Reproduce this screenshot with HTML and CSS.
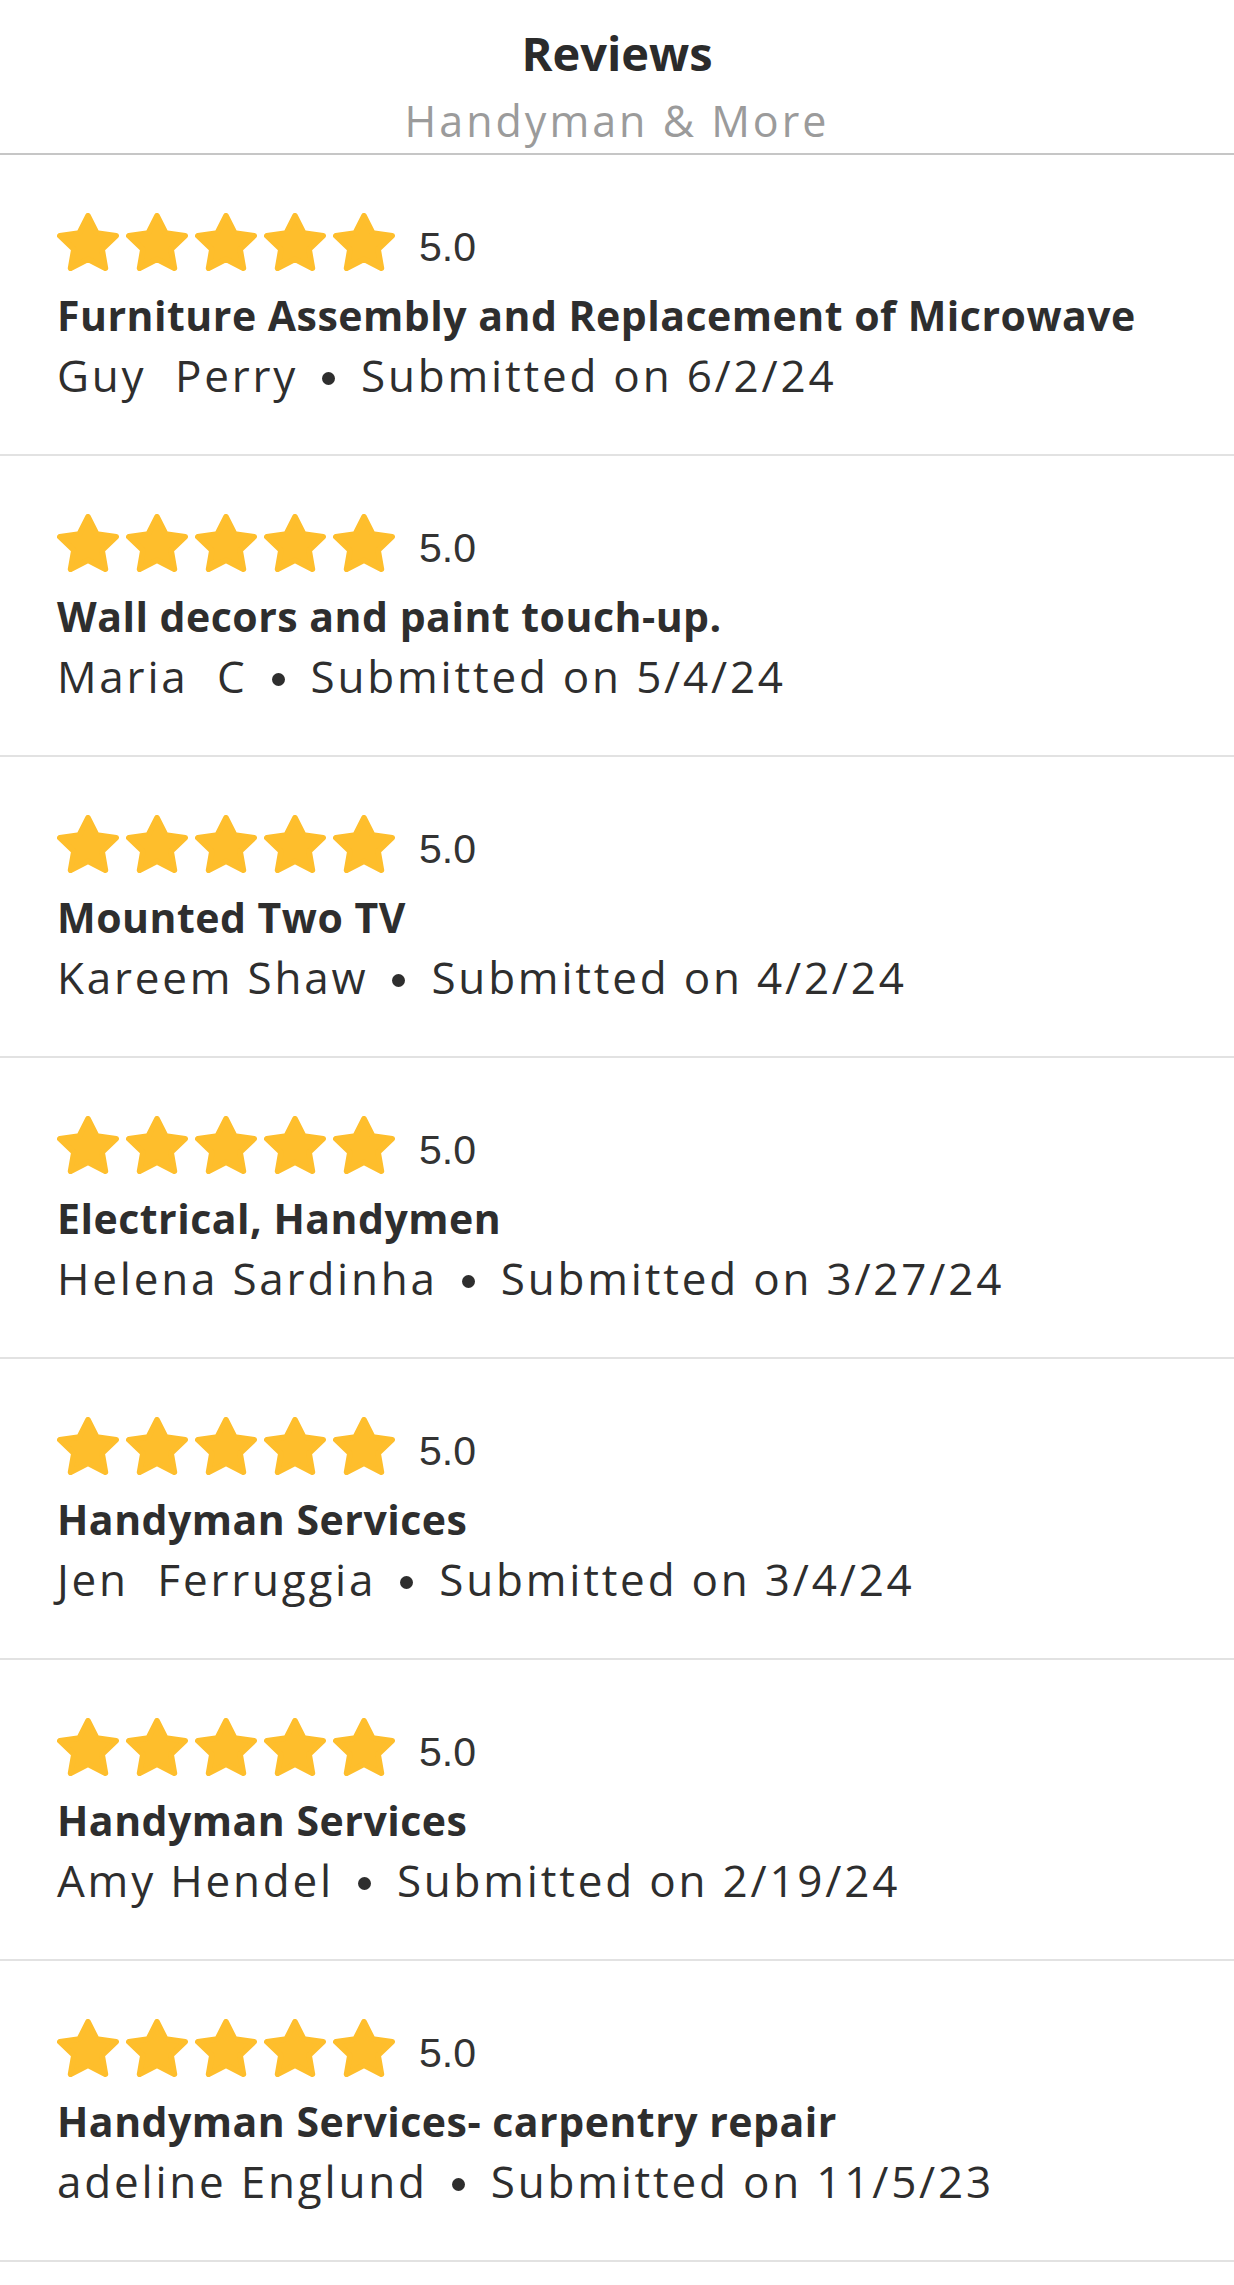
FILE: index.html
```html
<!DOCTYPE html>
<html lang="en">
<head>
<meta charset="utf-8">
<title>Reviews - Handyman &amp; More</title>
<link rel="stylesheet" href="styles.css">
</head>
<body>
<svg class="defs" width="0" height="0" aria-hidden="true">
  <defs>
    <symbol id="star" viewBox="1 1 22 21" preserveAspectRatio="none">
      <path d="M12 2l3.09 6.26L22 9.27l-5 4.87 1.18 6.88L12 17.77l-6.18 3.25L7 14.14 2 9.27l6.91-1.01L12 2z" fill="#febe2c" stroke="#febe2c" stroke-width="2" stroke-linejoin="round"/>
    </symbol>
  </defs>
</svg>
<header class="header">
  <h1 class="title">Reviews</h1>
  <div class="subtitle">Handyman &amp; More</div>
</header>
<main class="list">
  <article class="review">
    <div class="rating">
      <div class="stars">
        <svg class="star" preserveAspectRatio="none"><use href="#star"/></svg>
        <svg class="star" preserveAspectRatio="none"><use href="#star"/></svg>
        <svg class="star" preserveAspectRatio="none"><use href="#star"/></svg>
        <svg class="star" preserveAspectRatio="none"><use href="#star"/></svg>
        <svg class="star" preserveAspectRatio="none"><use href="#star"/></svg>
      </div>
      <span class="score">5.0</span>
    </div>
    <div class="job">Furniture Assembly and Replacement of Microwave</div>
    <div class="meta"><span class="name">Guy  Perry</span><span class="dot"></span><span>Submitted on 6/2/24</span></div>
  </article>
  <article class="review">
    <div class="rating">
      <div class="stars">
        <svg class="star" preserveAspectRatio="none"><use href="#star"/></svg>
        <svg class="star" preserveAspectRatio="none"><use href="#star"/></svg>
        <svg class="star" preserveAspectRatio="none"><use href="#star"/></svg>
        <svg class="star" preserveAspectRatio="none"><use href="#star"/></svg>
        <svg class="star" preserveAspectRatio="none"><use href="#star"/></svg>
      </div>
      <span class="score">5.0</span>
    </div>
    <div class="job">Wall decors and paint touch-up.</div>
    <div class="meta"><span class="name">Maria  C</span><span class="dot"></span><span>Submitted on 5/4/24</span></div>
  </article>
  <article class="review">
    <div class="rating">
      <div class="stars">
        <svg class="star" preserveAspectRatio="none"><use href="#star"/></svg>
        <svg class="star" preserveAspectRatio="none"><use href="#star"/></svg>
        <svg class="star" preserveAspectRatio="none"><use href="#star"/></svg>
        <svg class="star" preserveAspectRatio="none"><use href="#star"/></svg>
        <svg class="star" preserveAspectRatio="none"><use href="#star"/></svg>
      </div>
      <span class="score">5.0</span>
    </div>
    <div class="job">Mounted Two TV</div>
    <div class="meta"><span class="name">Kareem Shaw</span><span class="dot"></span><span>Submitted on 4/2/24</span></div>
  </article>
  <article class="review">
    <div class="rating">
      <div class="stars">
        <svg class="star" preserveAspectRatio="none"><use href="#star"/></svg>
        <svg class="star" preserveAspectRatio="none"><use href="#star"/></svg>
        <svg class="star" preserveAspectRatio="none"><use href="#star"/></svg>
        <svg class="star" preserveAspectRatio="none"><use href="#star"/></svg>
        <svg class="star" preserveAspectRatio="none"><use href="#star"/></svg>
      </div>
      <span class="score">5.0</span>
    </div>
    <div class="job">Electrical, Handymen</div>
    <div class="meta"><span class="name">Helena Sardinha</span><span class="dot"></span><span>Submitted on 3/27/24</span></div>
  </article>
  <article class="review">
    <div class="rating">
      <div class="stars">
        <svg class="star" preserveAspectRatio="none"><use href="#star"/></svg>
        <svg class="star" preserveAspectRatio="none"><use href="#star"/></svg>
        <svg class="star" preserveAspectRatio="none"><use href="#star"/></svg>
        <svg class="star" preserveAspectRatio="none"><use href="#star"/></svg>
        <svg class="star" preserveAspectRatio="none"><use href="#star"/></svg>
      </div>
      <span class="score">5.0</span>
    </div>
    <div class="job">Handyman Services</div>
    <div class="meta"><span class="name">Jen  Ferruggia</span><span class="dot"></span><span>Submitted on 3/4/24</span></div>
  </article>
  <article class="review">
    <div class="rating">
      <div class="stars">
        <svg class="star" preserveAspectRatio="none"><use href="#star"/></svg>
        <svg class="star" preserveAspectRatio="none"><use href="#star"/></svg>
        <svg class="star" preserveAspectRatio="none"><use href="#star"/></svg>
        <svg class="star" preserveAspectRatio="none"><use href="#star"/></svg>
        <svg class="star" preserveAspectRatio="none"><use href="#star"/></svg>
      </div>
      <span class="score">5.0</span>
    </div>
    <div class="job">Handyman Services</div>
    <div class="meta"><span class="name">Amy Hendel</span><span class="dot"></span><span>Submitted on 2/19/24</span></div>
  </article>
  <article class="review">
    <div class="rating">
      <div class="stars">
        <svg class="star" preserveAspectRatio="none"><use href="#star"/></svg>
        <svg class="star" preserveAspectRatio="none"><use href="#star"/></svg>
        <svg class="star" preserveAspectRatio="none"><use href="#star"/></svg>
        <svg class="star" preserveAspectRatio="none"><use href="#star"/></svg>
        <svg class="star" preserveAspectRatio="none"><use href="#star"/></svg>
      </div>
      <span class="score">5.0</span>
    </div>
    <div class="job">Handyman Services- carpentry repair</div>
    <div class="meta"><span class="name">adeline Englund</span><span class="dot"></span><span>Submitted on 11/5/23</span></div>
  </article>
</main>
</body>
</html>
```
FILE: styles.css
```css
html, body {
  margin: 0;
  padding: 0;
  background: #ffffff;
}

body {
  font-family: "Open Sans", "Noto Sans", sans-serif;
  color: #2e2e2e;
}

.defs {
  position: absolute;
  width: 0;
  height: 0;
  overflow: hidden;
}

.header {
  padding: 23px 0 4px;
  text-align: center;
  border-bottom: 2px solid #c6c6c6;
}

.title {
  margin: 0;
  font-size: 47px;
  line-height: 60px;
  font-weight: 700;
  color: #2b2b2b;
}

.subtitle {
  margin-top: 10px;
  font-size: 43px;
  line-height: 56px;
  letter-spacing: 3px;
  color: #9b9b9b;
}

.review {
  padding: 58px 40px 49px 57px;
  border-bottom: 2px solid #e2e2e2;
}

.rating {
  display: flex;
  align-items: flex-start;
  height: 58px;
}

.stars {
  display: flex;
  gap: 7px;
}

.star {
  display: block;
  width: 62px;
  height: 58px;
}

.score {
  margin: 14px 0 0 24px;
  font-family: "Liberation Sans", Arial, sans-serif;
  font-size: 41px;
  line-height: 40px;
  color: #333333;
}

.job {
  margin-top: 14px;
  font-size: 41px;
  line-height: 60px;
  letter-spacing: 0.5px;
  font-weight: 700;
  color: #2e2e2e;
}

.meta {
  font-size: 44px;
  line-height: 60px;
  letter-spacing: 2.8px;
  color: #2e2e2e;
  white-space: pre;
}

.dot {
  display: inline-block;
  width: 13px;
  height: 13px;
  margin: 0 26px 0 24px;
  border-radius: 50%;
  background: #2e2e2e;
  vertical-align: 7px;
}
```
